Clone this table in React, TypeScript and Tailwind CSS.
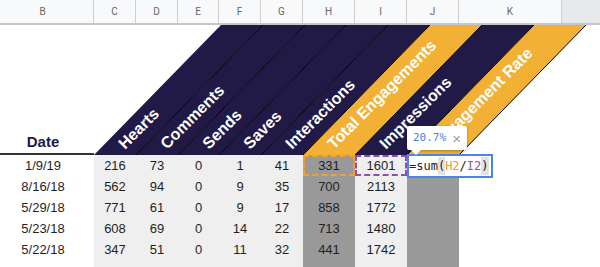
import React from "react";

const NAVY = "#211a47";
const GOLD = "#f2b134";

const cols = [
  { l: "B", w: "w-[94px]", bg: "", pad: "pr-[8px]" },
  { l: "C", w: "w-[42px]", bg: "bg-[#efefef]", pad: "" },
  { l: "D", w: "w-[42px]", bg: "bg-[#efefef]", pad: "" },
  { l: "E", w: "w-[41px]", bg: "bg-[#efefef]", pad: "" },
  { l: "F", w: "w-[42px]", bg: "bg-[#efefef]", pad: "" },
  { l: "G", w: "w-[42px]", bg: "bg-[#efefef]", pad: "" },
  { l: "H", w: "w-[52px]", bg: "bg-[#999999]", pad: "" },
  { l: "I", w: "w-[52px]", bg: "bg-[#efefef]", pad: "" },
  { l: "J", w: "w-[52px]", bg: "bg-[#999999]", pad: "" },
  { l: "K", w: "w-[103px]", bg: "", pad: "" },
];

const rows = [
  ["1/9/19", "216", "73", "0", "1", "41", "331", "1601"],
  ["8/16/18", "562", "94", "0", "9", "35", "700", "2113"],
  ["5/29/18", "771", "61", "0", "9", "17", "858", "1772"],
  ["5/23/18", "608", "69", "0", "14", "22", "713", "1480"],
  ["5/22/18", "347", "51", "0", "11", "32", "441", "1742"],
  ["", "", "", "", "", "", "", ""],
];

const bands = [
  { L: 94, R: 136, c: NAVY, t: "Hearts" },
  { L: 136, R: 178, c: NAVY, t: "Comments" },
  { L: 178, R: 219, c: NAVY, t: "Sends" },
  { L: 219, R: 261, c: NAVY, t: "Saves" },
  { L: 261, R: 303, c: NAVY, t: "Interactions" },
  { L: 303, R: 355, c: GOLD, t: "Total Engagements" },
  { L: 355, R: 407, c: NAVY, t: "Impressions" },
  { L: 407, R: 459, c: GOLD, t: "Engagement Rate" },
];

const H = 130;
const OFF = 127;

function BandHeader() {
  return (
    <svg width={506} height={H} className="block">
      {bands.map((b, i) => {
        const l = b.L - 94;
        const r = b.R - 94;
        return (
          <polygon
            key={"p" + i}
            points={`${l},${H} ${r},${H} ${r + OFF},0 ${l + OFF},0`}
            fill={b.c}
          />
        );
      })}
      {bands.map((b, i) => {
        const r = b.R - 94;
        return (
          <line
            key={"l" + i}
            x1={r}
            y1={H}
            x2={r + OFF}
            y2={0}
            stroke="#000"
            strokeWidth={1}
          />
        );
      })}
      {bands.map((b, i) => {
        const x = b.L - 94 + 27;
        const y = 121;
        return (
          <text
            key={"t" + i}
            x={x}
            y={y}
            transform={`rotate(-45 ${x} ${y})`}
            dominantBaseline="central"
            fill="#ffffff"
            fontFamily="'Liberation Sans', Arial, sans-serif"
            fontWeight={700}
            fontSize={16}
          >
            {b.t}
          </text>
        );
      })}
    </svg>
  );
}

export default function App() {
  return (
    <div className="relative w-[600px] h-[267px] overflow-hidden bg-white font-['Liberation_Sans',Arial,sans-serif]">
      <div className="flex h-[25px] border-b-2 border-[#c6c6c6] bg-[#f8f9fa]">
        {cols.map((c) => (
          <div
            key={c.l}
            className={`${c.w} ${c.pad} shrink-0 flex items-center justify-center border-r border-[#cfcfcf] text-[10px] text-[#666666] font-['Roboto',sans-serif]`}
          >
            {c.l}
          </div>
        ))}
        <div className="flex-1 bg-[#e7e8ea]" />
      </div>

      <div className="flex h-[130px]">
        <div className="w-[94px] shrink-0 flex items-end justify-center pr-[8px] pb-[3px] border-b-2 border-[#333333]">
          <span className="text-[15px] leading-[17px] font-bold text-[#211a47]">Date</span>
        </div>
        <BandHeader />
      </div>

      {rows.map((r, ri) => (
        <div key={ri} className="flex h-[21px]">
          {cols.map((c, ci) => {
            let extra = "";
            if (ri === 0 && ci === 6) extra = "border-2 border-dashed border-[#f5a128]";
            if (ri === 0 && ci === 7) extra = "border-2 border-dashed border-[#8e4fb0]";
            return (
              <div
                key={ci}
                className={`${c.w} ${c.bg} ${c.pad} ${extra} shrink-0 box-border flex items-center justify-center text-[13px] text-[#1f1f1f]`}
              >
                {r[ci] ?? ""}
              </div>
            );
          })}
        </div>
      ))}

      <div className="absolute left-[407px] top-[154px] w-[86px] h-[24px] box-border border-2 border-[#4a86e8] bg-white flex items-center font-['DejaVu_Sans_Mono',monospace] text-[12px] text-[#202124] whitespace-pre">
        <span>=sum</span>
        <span className="bg-[#e3e3e3]">(</span>
        <span className="text-[#f29a1f]">H2</span>
        <span>/</span>
        <span className="text-[#8e4fb0]">I2</span>
        <span className="bg-[#e3e3e3]">)</span>
      </div>

      <div className="absolute left-[407px] top-[126px] w-[60px] h-[24px] bg-white rounded-[2px] shadow-[0_1px_3px_rgba(0,0,0,0.3)] flex items-center pl-[6px]">
        <span className="font-['DejaVu_Sans_Mono',monospace] text-[11px] text-[#4a7fe0]">20.7%</span>
        <span className="ml-[6px] text-[15px] leading-none text-[#9aa0a6]">×</span>
        <div className="absolute left-[4px] top-full w-0 h-0 border-l-[5px] border-r-[5px] border-t-[5px] border-l-transparent border-r-transparent border-t-white" />
      </div>
    </div>
  );
}
